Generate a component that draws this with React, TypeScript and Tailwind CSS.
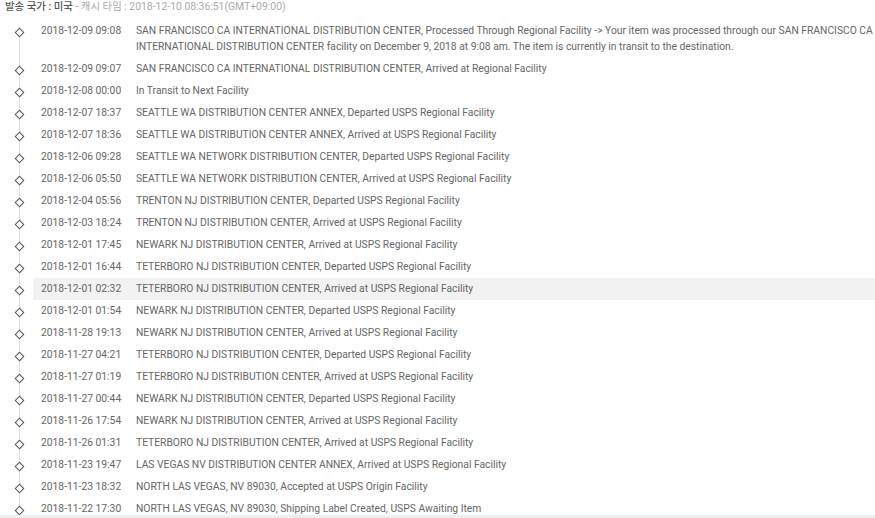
import React from "react";

interface TrackEvent {
  time: string;
  text: string;
}

const EVENTS: TrackEvent[] = [
  {
    time: "2018-12-09 09:08",
    text: "SAN FRANCISCO CA INTERNATIONAL DISTRIBUTION CENTER, Processed Through Regional Facility -> Your item was processed through our SAN FRANCISCO CA INTERNATIONAL DISTRIBUTION CENTER facility on December 9, 2018 at 9:08 am. The item is currently in transit to the destination.",
  },
  { time: "2018-12-09 09:07", text: "SAN FRANCISCO CA INTERNATIONAL DISTRIBUTION CENTER, Arrived at Regional Facility" },
  { time: "2018-12-08 00:00", text: "In Transit to Next Facility" },
  { time: "2018-12-07 18:37", text: "SEATTLE WA DISTRIBUTION CENTER ANNEX, Departed USPS Regional Facility" },
  { time: "2018-12-07 18:36", text: "SEATTLE WA DISTRIBUTION CENTER ANNEX, Arrived at USPS Regional Facility" },
  { time: "2018-12-06 09:28", text: "SEATTLE WA NETWORK DISTRIBUTION CENTER, Departed USPS Regional Facility" },
  { time: "2018-12-06 05:50", text: "SEATTLE WA NETWORK DISTRIBUTION CENTER, Arrived at USPS Regional Facility" },
  { time: "2018-12-04 05:56", text: "TRENTON NJ DISTRIBUTION CENTER, Departed USPS Regional Facility" },
  { time: "2018-12-03 18:24", text: "TRENTON NJ DISTRIBUTION CENTER, Arrived at USPS Regional Facility" },
  { time: "2018-12-01 17:45", text: "NEWARK NJ DISTRIBUTION CENTER, Arrived at USPS Regional Facility" },
  { time: "2018-12-01 16:44", text: "TETERBORO NJ DISTRIBUTION CENTER, Departed USPS Regional Facility" },
  { time: "2018-12-01 02:32", text: "TETERBORO NJ DISTRIBUTION CENTER, Arrived at USPS Regional Facility" },
  { time: "2018-12-01 01:54", text: "NEWARK NJ DISTRIBUTION CENTER, Departed USPS Regional Facility" },
  { time: "2018-11-28 19:13", text: "NEWARK NJ DISTRIBUTION CENTER, Arrived at USPS Regional Facility" },
  { time: "2018-11-27 04:21", text: "TETERBORO NJ DISTRIBUTION CENTER, Departed USPS Regional Facility" },
  { time: "2018-11-27 01:19", text: "TETERBORO NJ DISTRIBUTION CENTER, Arrived at USPS Regional Facility" },
  { time: "2018-11-27 00:44", text: "NEWARK NJ DISTRIBUTION CENTER, Departed USPS Regional Facility" },
  { time: "2018-11-26 17:54", text: "NEWARK NJ DISTRIBUTION CENTER, Arrived at USPS Regional Facility" },
  { time: "2018-11-26 01:31", text: "TETERBORO NJ DISTRIBUTION CENTER, Arrived at USPS Regional Facility" },
  { time: "2018-11-23 19:47", text: "LAS VEGAS NV DISTRIBUTION CENTER ANNEX, Arrived at USPS Regional Facility" },
  { time: "2018-11-23 18:32", text: "NORTH LAS VEGAS, NV 89030, Accepted at USPS Origin Facility" },
  { time: "2018-11-22 17:30", text: "NORTH LAS VEGAS, NV 89030, Shipping Label Created, USPS Awaiting Item" },
];

const HOVER_ROW = 11;

const EventRow = ({ time, text, active, last }: TrackEvent & { active: boolean; last: boolean }) => (
  <li className="relative flex">
    <div className="relative w-[33px] shrink-0">
      {!last && <div className="absolute left-[19px] top-[12px] bottom-[-12px] w-px bg-[#dedede]" />}
      <div className="absolute left-[16px] top-[9px] h-[7px] w-[7px] rotate-45 border-[1.5px] border-[#555] bg-white" />
    </div>
    <div className={`flex flex-1 py-[3px] pl-2 ${active ? "bg-[#f2f2f2]" : ""}`}>
      <span className="w-[95px] shrink-0">{time}</span>
      <span className="flex-1">{text}</span>
    </div>
  </li>
);

export default function App() {
  return (
    <div
      className="relative h-[518px] w-[875px] overflow-hidden bg-white text-[10.3px] leading-4 text-[#666]"
      style={{ fontFamily: "Roboto, 'Noto Sans CJK KR', sans-serif" }}
    >
      <div className="h-5 pl-[5px] pt-px text-[10.4px] leading-3">
        <span className="font-medium text-[#555]">발송 국가 : 미국</span>
        <span className="text-[#aaa]"> - 캐시 타임 : 2018-12-10 08:36:51(GMT+09:00)</span>
      </div>
      <ul>
        {EVENTS.map((e, i) => (
          <EventRow key={e.time} {...e} active={i === HOVER_ROW} last={i === EVENTS.length - 1} />
        ))}
      </ul>
      <div className="absolute inset-x-0 bottom-0 h-[3px] bg-[#eceef2]" />
    </div>
  );
}
